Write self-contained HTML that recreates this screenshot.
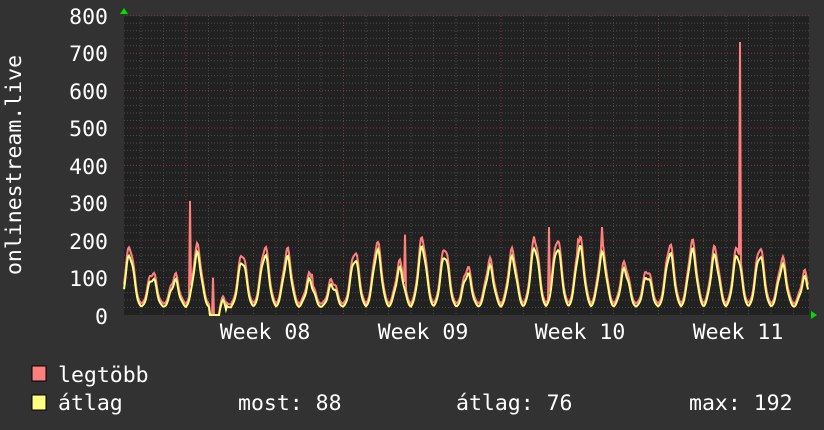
<!DOCTYPE html>
<html><head><meta charset="utf-8"><style>
html,body{margin:0;padding:0;background:#333;}
svg{display:block;}
text{font-family:"DejaVu Sans Mono","Liberation Mono",monospace;fill:#fff;}
</style></head><body>
<svg id="s" width="824" height="430" viewBox="0 0 824 430" xmlns="http://www.w3.org/2000/svg">
<rect width="824" height="430" fill="#323232"/>
<rect x="124" y="16" width="685" height="299" fill="#212121"/>
<g id="grid"></g>
<polyline id="red" fill="none" stroke="#ff7f7f" stroke-width="2"/>
<polyline id="yel" fill="none" stroke="#ffff80" stroke-width="2"/>
<polygon points="120,14 128,14 124,8" fill="#00dd00"/>
<polygon points="811,311 811,319 817,315" fill="#00dd00"/>
<g font-size="21.5" text-anchor="end">
<text x="108" y="24">800</text><text x="108" y="61">700</text><text x="108" y="99">600</text><text x="108" y="136">500</text><text x="108" y="174">400</text><text x="108" y="211">300</text><text x="108" y="249">200</text><text x="108" y="286">100</text><text x="108" y="324">0</text>
</g>
<text transform="translate(21,165) rotate(-90)" font-size="21.5" text-anchor="middle">onlinestream.live</text>
<g font-size="21.5" text-anchor="middle">
<text x="265" y="339">Week 08</text><text x="423" y="339">Week 09</text><text x="580" y="339">Week 10</text><text x="738" y="339">Week 11</text>
</g>
<rect x="32" y="366" width="14" height="15" fill="#ff7f7f" stroke="#000" stroke-width="1"/>
<rect x="32" y="395" width="14" height="15" fill="#ffff80" stroke="#000" stroke-width="1"/>
<g font-size="21.5">
<text x="58" y="382">legtöbb</text>
<text x="58" y="410">átlag</text>
<text x="238" y="410">most: 88</text>
<text x="456" y="410">átlag: 76</text>
<text x="689" y="410">max: 192</text>
</g>
</svg>
<script>
var g=document.getElementById('grid'),h='';
function Y(v){return 315-v*0.374;}
for(var v=20;v<=800;v+=20){var y=Y(v).toFixed(1);var maj=v%100==0;
h+='<line x1="124" x2="809" y1="'+y+'" y2="'+y+'" stroke="'+(maj?'#7a3b3b':'#4a4a4a')+'" stroke-dasharray="1,2"/>';}
for(var i=-2;i<32;i++){var x=186+i*22.5;if(x<126||x>808)continue;var maj=((i%7)+7)%7==0;
h+='<line y1="16" y2="315" x1="'+x+'" x2="'+x+'" stroke="'+(maj?'#7a3b3b':'#4a4a4a')+'" stroke-dasharray="1,2"/>';}
g.innerHTML=h;
var peaks=[160,100,90,160,40,145,160,150,90,80,150,170,120,180,160,110,125,150,180,180,180,160,120,105,165,170,155,160,160,130,95];
var spikes={190:305,213:100,405:215,549:235,602:235,740:730,312:110,378:195,534:210,578:200};
var ry=[],yy=[];
for(var x=124;x<=808;x++){
 var d=(x-119)/22.5;var k=Math.floor(d);var ph=d-k;
 var p=peaks[Math.min(k,peaks.length-1)];
 var s=Math.exp(-Math.pow((ph-0.48)/0.26,2));
 var val=20+(p-20)*s + 10*Math.sin(x*0.9)*s;
 if(x>=211&&x<=226)val=(x>=220&&x<=226)?40*Math.exp(-Math.pow((x-223)/3,2)):0;
 if(x>=210&&x<=219)val=0;
 var r=val*1.1+6;if(val==0)r=0;
 for(var sx in spikes){if(Math.abs(x-sx)<1)r=spikes[sx];}
 ry.push(x+','+Y(r).toFixed(1));yy.push(x+','+Y(val).toFixed(1));
}
document.getElementById('red').setAttribute('points',ry.join(' '));
document.getElementById('yel').setAttribute('points',yy.join(' '));
</script>
</body></html>
